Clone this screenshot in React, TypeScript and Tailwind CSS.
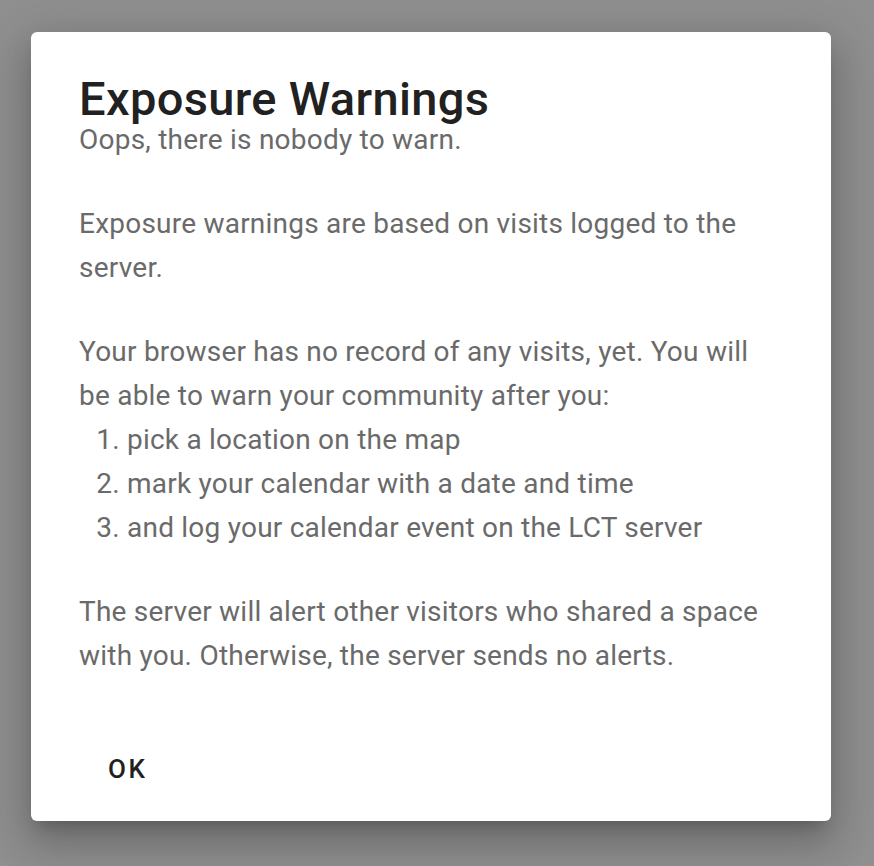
import React from 'react';

const App: React.FC = () => {
  return (
    <div className="min-h-screen w-full bg-[#8f8f8f] pt-[32px] pl-[31px]" style={{ fontFamily: 'Roboto, "Liberation Sans", sans-serif' }}>
      {/* Dialog */}
      <div className="w-[800px] h-[789px] bg-white rounded-[6px] shadow-[0_11px_15px_-7px_rgba(0,0,0,0.2),0_24px_38px_3px_rgba(0,0,0,0.14),0_9px_46px_8px_rgba(0,0,0,0.12)] flex flex-col">
        <div className="px-[48px] pt-[47px]">
          <h2 className="text-[47px] leading-[40px] font-medium tracking-[0.0075em] text-[#212121]">Exposure Warnings</h2>
          <div className="text-[28px] leading-[44px] tracking-[0.008em] text-[#6a6a6a]">
            <p className="mt-[4px] leading-[34px]">Oops, there is nobody to warn.</p>
            <p className="mt-[45px]">Exposure warnings are based on visits logged to the server.</p>
            <p className="mt-[40px]">
              Your browser has no record of any visits, yet. You will be able to warn your community after you:
            </p>
            <ol className="list-decimal pl-[48px]">
              <li>pick a location on the map</li>
              <li>mark your calendar with a date and time</li>
              <li>and log your calendar event on the LCT server</li>
            </ol>
            <p className="mt-[40px]">
              The server will alert other visitors who shared a space with you. Otherwise, the server sends no alerts.
            </p>
          </div>
        </div>
        <div className="mt-auto pl-[57px] pb-[24px]">
          <button className="px-[20px] h-[56px] text-[26px] font-medium tracking-[0.1em] text-[#212121] uppercase">
            OK
          </button>
        </div>
      </div>
    </div>
  );
};

export default App;
